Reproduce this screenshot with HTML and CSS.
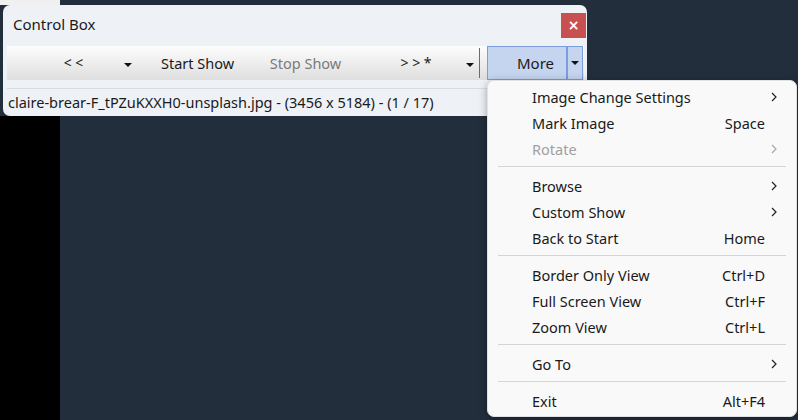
FILE: index.html
```html
<!DOCTYPE html>
<html lang="en">
<head>
    <meta charset="UTF-8">
    <title>Control Box</title>
    <link rel="stylesheet" href="styles.css">
</head>
<body>
    <div class="window">
        <div class="titlebar">
            <span class="title">Control Box</span>
            <button class="close-btn">&#215;</button>
        </div>

        <div class="toolbar">
            <span class="tool tool-prev">&lt; &lt;</span>
            <span class="tool tool-arrow"><span class="caret"></span></span>
            <span class="tool tool-start">Start Show</span>
            <span class="tool tool-stop">Stop Show</span>
            <span class="tool tool-next">&gt; &gt; *</span>
            <span class="tool tool-arrow2"><span class="caret"></span></span>
            <span class="tool-sep"></span>
            <div class="more-btn">
                <span class="more-main">More</span>
                <span class="more-drop"><span class="caret"></span></span>
            </div>
        </div>

        <div class="status">claire-brear-F_tPZuKXXH0-unsplash.jpg - (3456 x 5184) - (1 / 17)</div>
    </div>

    <div class="menu">
        <div class="menu-item">
            <span class="label">Image Change Settings</span>
            <span class="key"></span>
            <span class="sub"><svg width="6" height="10" viewBox="0 0 6 10"><path d="M1 1 L5 5 L1 9" fill="none" stroke="#222" stroke-width="1.2"/></svg></span>
        </div>
        <div class="menu-item">
            <span class="label">Mark Image</span>
            <span class="key">Space</span>
            <span class="sub"></span>
        </div>
        <div class="menu-item disabled">
            <span class="label">Rotate</span>
            <span class="key"></span>
            <span class="sub"><svg width="6" height="10" viewBox="0 0 6 10"><path d="M1 1 L5 5 L1 9" fill="none" stroke="#a8a8a8" stroke-width="1.2"/></svg></span>
        </div>
        <div class="menu-sep"></div>
        <div class="menu-item">
            <span class="label">Browse</span>
            <span class="key"></span>
            <span class="sub"><svg width="6" height="10" viewBox="0 0 6 10"><path d="M1 1 L5 5 L1 9" fill="none" stroke="#222" stroke-width="1.2"/></svg></span>
        </div>
        <div class="menu-item">
            <span class="label">Custom Show</span>
            <span class="key"></span>
            <span class="sub"><svg width="6" height="10" viewBox="0 0 6 10"><path d="M1 1 L5 5 L1 9" fill="none" stroke="#222" stroke-width="1.2"/></svg></span>
        </div>
        <div class="menu-item">
            <span class="label">Back to Start</span>
            <span class="key">Home</span>
            <span class="sub"></span>
        </div>
        <div class="menu-sep"></div>
        <div class="menu-item">
            <span class="label">Border Only View</span>
            <span class="key">Ctrl+D</span>
            <span class="sub"></span>
        </div>
        <div class="menu-item">
            <span class="label">Full Screen View</span>
            <span class="key">Ctrl+F</span>
            <span class="sub"></span>
        </div>
        <div class="menu-item">
            <span class="label">Zoom View</span>
            <span class="key">Ctrl+L</span>
            <span class="sub"></span>
        </div>
        <div class="menu-sep"></div>
        <div class="menu-item">
            <span class="label">Go To</span>
            <span class="key"></span>
            <span class="sub"><svg width="6" height="10" viewBox="0 0 6 10"><path d="M1 1 L5 5 L1 9" fill="none" stroke="#222" stroke-width="1.2"/></svg></span>
        </div>
        <div class="menu-sep"></div>
        <div class="menu-item">
            <span class="label">Exit</span>
            <span class="key">Alt+F4</span>
            <span class="sub"></span>
        </div>
    </div>
</body>
</html>
```

FILE: styles.css
```css
* {
    margin: 0;
    padding: 0;
    box-sizing: border-box;
}

html, body {
    width: 798px;
    height: 420px;
    overflow: hidden;
}

body {
    font-family: "Noto Sans", "Open Sans", sans-serif;
    font-size: 14.5px;
    color: #1a1a1a;
    background:
        linear-gradient(#f0f0f0, #f0f0f0) 0 0 / 60px 5px no-repeat,
        linear-gradient(#000, #000) 0 116px / 60px 100% no-repeat,
        #232e3d;
    position: relative;
    padding: 5px 0 0 3px;
}

.window {
    width: 584px;
    height: 111px;
    background: #eef2f7;
    border-radius: 7px;
    overflow: hidden;
}

.titlebar {
    height: 41px;
    display: flex;
    align-items: flex-start;
    justify-content: space-between;
}

.title {
    margin: 9px 0 0 10px;
    line-height: 20px;
    font-size: 15px;
}

.close-btn {
    width: 25px;
    height: 25px;
    margin: 8px 1px 0 0;
    border: none;
    background: #c75050;
    color: #fff;
    font-family: "DejaVu Sans", sans-serif;
    font-size: 14px;
    font-weight: bold;
    line-height: 25px;
}

.toolbar {
    margin: 0 3px 0 4px;
    height: 34px;
    background: linear-gradient(#fdfdfd, #dedede);
    display: flex;
    align-items: center;
    padding-left: 40px;
}

.tool {
    text-align: center;
    line-height: 34px;
    white-space: nowrap;
}

.tool-prev { width: 53px; font-size: 14px; }
.tool-arrow { width: 55px; }
.tool-start { width: 85px; }
.tool-stop { width: 131px; color: #7a7a7a; }
.tool-next { width: 90px; font-size: 14px; }
.tool-arrow2 { width: 18px; }

.caret {
    display: inline-block;
    width: 0;
    height: 0;
    border-left: 4px solid transparent;
    border-right: 4px solid transparent;
    border-top: 4px solid #111;
    vertical-align: middle;
}

.tool-sep {
    width: 1px;
    height: 30px;
    background: #6b6b6b;
}

.more-btn {
    margin-left: 7px;
    width: 96px;
    height: 34px;
    display: flex;
    background: #c5d5ef;
    border: 1px solid #7c9ddc;
}

.more-main {
    width: 80px;
    padding-right: 12px;
    text-align: right;
    line-height: 32px;
    font-size: 15px;
    border-right: 2px solid #7c9ddc;
}

.more-drop {
    flex: 1;
    display: flex;
    align-items: center;
    justify-content: center;
}

.status {
    margin: 8px 0 0 4px;
    border-top: 1px solid #d8dbe0;
    padding-left: 1px;
    line-height: 26px;
    white-space: nowrap;
}

.menu {
    position: absolute;
    left: 487px;
    top: 80px;
    width: 310px;
    padding: 3px 0 2px;
    background: #f9f9f9;
    border: 1px solid #e2e2e2;
    border-radius: 7px;
    box-shadow: 0 2px 8px rgba(0, 0, 0, 0.35);
}

.menu-item {
    height: 26px;
    display: grid;
    grid-template-columns: 1fr auto 31px;
    align-items: center;
    padding-left: 44px;
}

.menu-item.disabled {
    color: #a0a0a0;
}

.key {
    text-align: right;
}

.sub {
    display: flex;
    align-items: center;
    padding-left: 6px;
}

.menu-sep {
    height: 11px;
    margin: 0 10px;
    padding-top: 4px;
}

.menu-sep::before {
    content: "";
    display: block;
    height: 1px;
    background: #d5d5d5;
}
```
